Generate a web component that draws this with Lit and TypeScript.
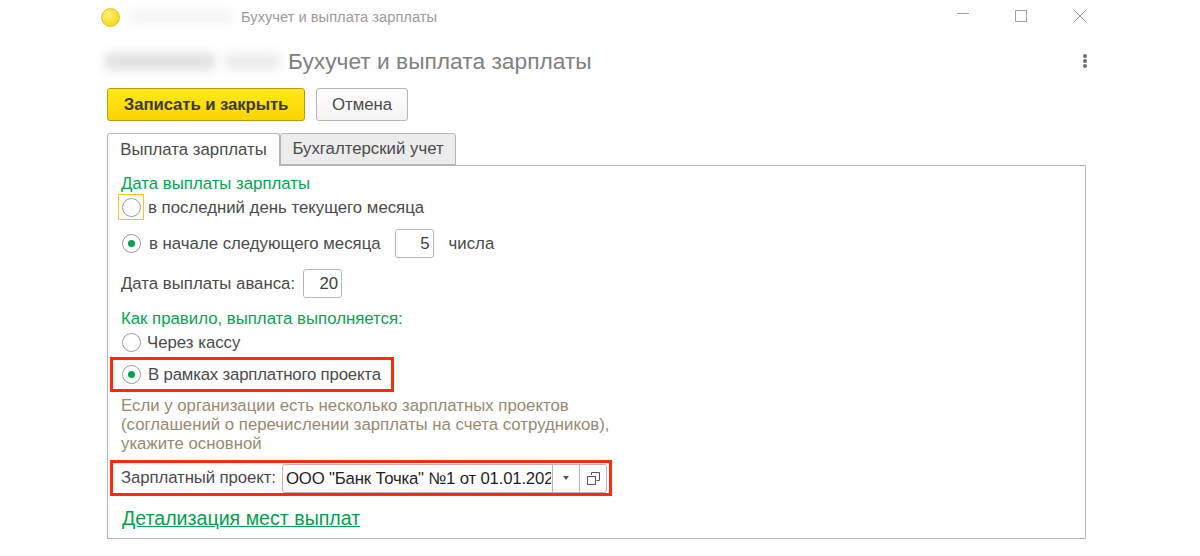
import { LitElement, html, css } from 'lit';
import { customElement } from 'lit/decorators.js';

@customElement('app-root')
export class AppRoot extends LitElement {
  static styles = css`
    :host {
      display: block;
      width: 1200px;
      height: 556px;
      overflow: hidden;
      background: #fff;
      font-family: 'Liberation Sans', Arial, sans-serif;
      font-size: 16.8px;
      color: #4a4a4a;
    }
    .titlebar {
      height: 34px;
      display: flex;
      align-items: center;
      padding-left: 101px;
      box-sizing: border-box;
    }
    .logo {
      width: 19px;
      height: 19px;
      border-radius: 50%;
      box-sizing: border-box;
      border: 1px solid #e2bd2b;
      background: radial-gradient(circle at 40% 35%, #fff27a, #fbd91f 70%);
    }
    .blur {
      background: #c9c9c9;
      filter: blur(5px);
      opacity: 0.55;
    }
    .blur.small {
      width: 104px;
      height: 16px;
      margin: 0 8px 0 9px;
      opacity: 0.18;
    }
    .win-title {
      font-size: 14.7px;
      color: #9b9b9b;
      flex: 1;
    }
    .winctl {
      display: flex;
      margin: -2px 114px 0 0;
      gap: 46px;
    }
    .winctl svg {
      width: 12px;
      height: 12px;
      display: block;
    }
    .winctl svg:nth-child(2) {
      margin-right: 1px;
    }
    .header {
      height: 54px;
      display: flex;
      align-items: center;
      padding-left: 105px;
      box-sizing: border-box;
    }
    .blur.big {
      width: 110px;
      height: 17px;
      margin-right: 10px;
    }
    .blur.big2 {
      width: 55px;
      height: 17px;
      margin-right: 8px;
      opacity: 0.35;
    }
    h1 {
      margin: 0;
      font-size: 22.75px;
      font-weight: 400;
      color: #808080;
      flex: 1;
    }
    .more {
      margin-right: 113px;
      display: flex;
      flex-direction: column;
      gap: 1px;
    }
    .more i {
      width: 4px;
      height: 4px;
      border-radius: 50%;
      background: #6f6f6f;
    }
    .actions {
      display: flex;
      gap: 11px;
      padding-left: 107px;
      height: 45px;
    }
    .btn {
      height: 33px;
      box-sizing: border-box;
      border-radius: 3px;
      display: flex;
      align-items: center;
      justify-content: center;
    }
    .btn.primary {
      width: 198px;
      font-weight: 700;
      letter-spacing: -0.1px;
      color: #3b3b2a;
      background: linear-gradient(#ffe81a, #fcd400);
      border: 1px solid #b79b18;
    }
    .btn.cancel {
      width: 92px;
      color: #4a4a4a;
      background: linear-gradient(#fff, #f2f2f2);
      border: 1px solid #b5b5b5;
    }
    .tabs {
      display: flex;
      margin-left: 107px;
      height: 32px;
    }
    .tab {
      box-sizing: border-box;
      border: 1px solid #b5b5b5;
      border-radius: 3px 3px 0 0;
      display: flex;
      align-items: center;
      justify-content: center;
      position: relative;
    }
    .tab.on {
      width: 173px;
      background: #fff;
      border-bottom: none;
      height: 33px;
      z-index: 1;
    }
    .tab.off {
      width: 176px;
      background: #ececec;
    }
    .panel {
      margin-left: 107px;
      width: 979px;
      height: 374px;
      box-sizing: border-box;
      border: 1px solid #b5b5b5;
      padding-left: 13px;
    }
    .group {
      color: #00a550;
      height: 19px;
      line-height: 19px;
    }
    .panel > .group:first-child {
      margin-top: 8px;
    }
    .row {
      display: flex;
      align-items: center;
      white-space: nowrap;
    }
    .radio {
      width: 19px;
      height: 19px;
      box-sizing: border-box;
      border: 1px solid #9a9a9a;
      border-radius: 50%;
      display: flex;
      align-items: center;
      justify-content: center;
      background: #fff;
      margin: 0 7px 0 1px;
      flex: none;
    }
    .radio.on::after {
      content: '';
      width: 7px;
      height: 7px;
      border-radius: 50%;
      background: #00a14b;
    }
    .focus {
      width: 26px;
      height: 26px;
      box-sizing: border-box;
      border: 1px solid #f3c623;
      display: flex;
      align-items: center;
      justify-content: center;
      margin: 0 4px 0 -3px;
      flex: none;
    }
    .focus .radio {
      margin: 0;
    }
    .num {
      width: 39px;
      height: 29px;
      box-sizing: border-box;
      border: 1px solid #b5b5b5;
      border-radius: 3px;
      display: flex;
      align-items: center;
      justify-content: flex-end;
      padding-right: 3px;
      color: #3c3c3c;
      flex: none;
    }
    .r1 {
      height: 26px;
      margin-top: 1px;
    }
    .r1 span {
      margin-top: 2px;
    }
    .r2 {
      height: 29px;
      margin-top: 9px;
    }
    .r2 .radio {
      margin-right: 8px;
    }
    .r2 .num {
      margin: 0 15px 0 14px;
    }
    .r3 {
      height: 29px;
      margin-top: 11px;
    }
    .r3 .num {
      margin-left: 8px;
    }
    .group.second {
      margin-top: 11px;
    }
    .r4 {
      height: 24px;
      margin-top: 2px;
    }
    .r4 .radio {
      margin-right: 6px;
    }
    .r4 span {
      margin-top: 2px;
    }
    .outlined {
      box-sizing: border-box;
      border: 3px solid #ff2a0a;
      margin-left: -11px;
    }
    .r5 {
      width: 284px;
      height: 35px;
      margin-top: 3px;
      padding-left: 8px;
      letter-spacing: -0.18px;
    }
    .note {
      color: #958a70;
      line-height: 19px;
      margin-top: 4px;
    }
    .r6 {
      width: 502px;
      height: 36px;
      margin-top: 7px;
      padding-left: 8px;
    }
    .r6 .label {
      width: 154px;
      flex: none;
      letter-spacing: -0.1px;
    }
    .combo {
      margin-left: 7px;
      width: 325px;
      height: 29px;
      box-sizing: border-box;
      border: 1px solid #b5b5b5;
      border-radius: 3px;
      display: flex;
      align-items: stretch;
      color: #1f1f1f;
      flex: none;
    }
    .combo .val {
      flex: 1;
      min-width: 0;
      overflow: hidden;
      white-space: nowrap;
      margin: 0 1px 0 3px;
      line-height: 27px;
      letter-spacing: -0.2px;
    }
    .combo .cell {
      width: 26px;
      border-left: 1px solid #b5b5b5;
      display: flex;
      align-items: center;
      justify-content: center;
      flex: none;
    }
    .arrow {
      width: 0;
      height: 0;
      border: 3px solid transparent;
      border-top: 4px solid #555;
      border-bottom: none;
    }
    .link {
      display: block;
      margin: 10px 0 0 1px;
      font-size: 19.6px;
      line-height: 24px;
      color: #00a14b;
      text-decoration: underline;
      width: max-content;
    }
  `;

  render() {
    return html`
      <div class="titlebar">
        <div class="logo"></div>
        <div class="blur small"></div>
        <div class="win-title">Бухучет и выплата зарплаты</div>
        <div class="winctl">
          <svg viewBox="0 0 12 12"><path d="M0 3.5H12" stroke="#a0a0a0" fill="none" /></svg>
          <svg viewBox="0 0 12 12"><rect x=".5" y=".5" width="11" height="11" stroke="#a0a0a0" fill="none" /></svg>
          <svg viewBox="0 0 12 12"><path d="M0 0L12 12M12 0L0 12" stroke="#909090" fill="none" /></svg>
        </div>
      </div>
      <div class="header">
        <div class="blur big"></div>
        <div class="blur big2"></div>
        <h1>Бухучет и выплата зарплаты</h1>
        <div class="more"><i></i><i></i><i></i></div>
      </div>
      <div class="actions">
        <div class="btn primary">Записать и закрыть</div>
        <div class="btn cancel">Отмена</div>
      </div>
      <div class="tabs">
        <div class="tab on">Выплата зарплаты</div>
        <div class="tab off">Бухгалтерский учет</div>
      </div>
      <div class="panel">
        <div class="group">Дата выплаты зарплаты</div>
        <div class="row r1">
          <div class="focus"><div class="radio"></div></div>
          <span>в последний день текущего месяца</span>
        </div>
        <div class="row r2">
          <div class="radio on"></div>
          в начале следующего месяца
          <div class="num">5</div>
          числа
        </div>
        <div class="row r3">Дата выплаты аванса: <div class="num">20</div></div>
        <div class="group second">Как правило, выплата выполняется:</div>
        <div class="row r4"><div class="radio"></div><span>Через кассу</span></div>
        <div class="row r5 outlined"><div class="radio on"></div>В рамках зарплатного проекта</div>
        <div class="note">
          Если у организации есть несколько зарплатных проектов<br />
          (соглашений о перечислении зарплаты на счета сотрудников),<br />
          укажите основной
        </div>
        <div class="row r6 outlined">
          <div class="label">Зарплатный проект:</div>
          <div class="combo">
            <div class="val">ООО "Банк Точка" №1 от 01.01.2021</div>
            <div class="cell"><div class="arrow"></div></div>
            <div class="cell">
              <svg width="13" height="13" viewBox="0 0 13 13" fill="none" stroke="#555">
                <path d="M4.5 3V.5H12.5V8.5H9.5" />
                <rect x=".5" y="4.5" width="8" height="8" />
              </svg>
            </div>
          </div>
        </div>
        <a class="link">Детализация мест выплат</a>
      </div>
    `;
  }
}
